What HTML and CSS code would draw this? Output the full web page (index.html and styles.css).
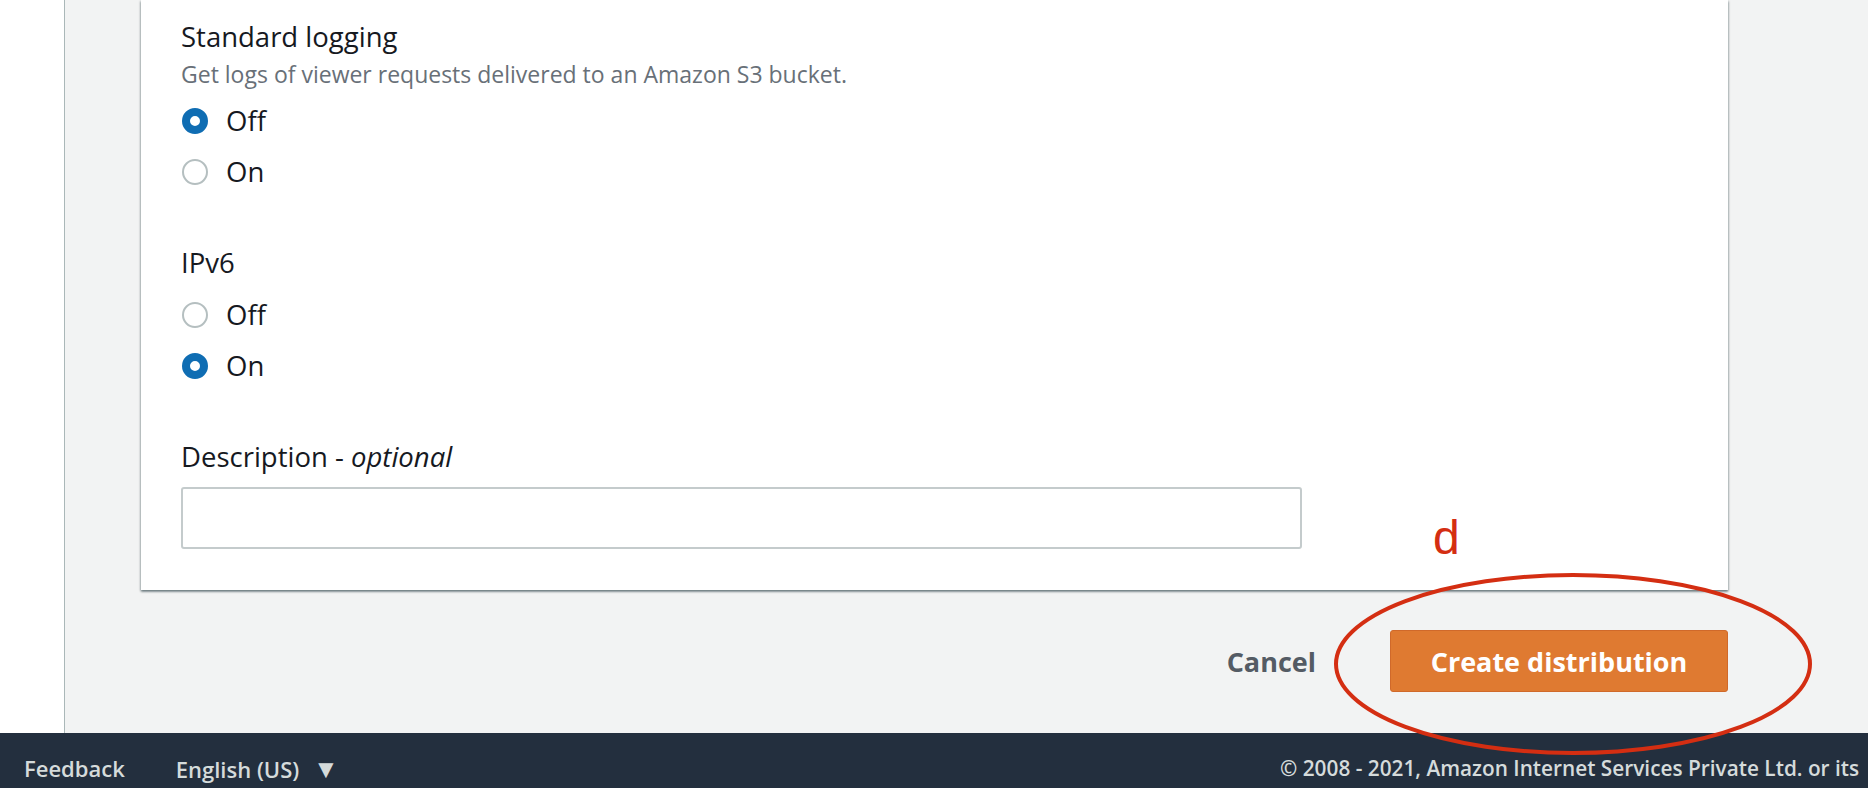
FILE: index.html
```html
<!DOCTYPE html>
<html lang="en">
<head>
<meta charset="utf-8">
<title>Create distribution</title>
<link rel="stylesheet" href="styles.css">
</head>
<body>
<div class="layout">
  <aside class="sidebar"></aside>
  <main class="main">
    <section class="card">
      <div class="field">
        <div class="label">Standard logging</div>
        <div class="hint">Get logs of viewer requests delivered to an Amazon S3 bucket.</div>
        <div class="radios">
          <label class="radio"><span class="dot checked"></span><span>Off</span></label>
          <label class="radio"><span class="dot"></span><span>On</span></label>
        </div>
      </div>
      <div class="field">
        <div class="label">IPv6</div>
        <div class="radios tight">
          <label class="radio"><span class="dot"></span><span>Off</span></label>
          <label class="radio"><span class="dot checked"></span><span>On</span></label>
        </div>
      </div>
      <div class="field">
        <div class="label">Description - <i>optional</i></div>
        <div class="input"></div>
      </div>
    </section>
    <div class="actions">
      <span class="cancel">Cancel</span>
      <span class="primary">Create distribution</span>
    </div>
    <div class="annotation">
      <span class="mark">d</span>
      <svg class="ring" width="490" height="190" viewBox="0 0 490 190"><ellipse cx="245" cy="95" rx="237" ry="89" fill="none" stroke="#d42e12" stroke-width="4"/></svg>
    </div>
  </main>
</div>
<footer class="footer">
  <span class="f-item">Feedback</span>
  <span class="f-item lang">English (US) <span class="caret">▼</span></span>
  <span class="copy">© 2008 - 2021, Amazon Internet Services Private Ltd. or its</span>
</footer>
</body>
</html>
```
FILE: styles.css
```css
* { box-sizing: border-box; }
html, body { margin: 0; padding: 0; }
body {
  width: 1868px;
  height: 788px;
  overflow: hidden;
  font-family: "Open Sans", "Noto Sans", sans-serif;
  color: #16191f;
  background: #f2f3f3;
}
.layout {
  display: flex;
  height: 733px;
}
.sidebar {
  width: 65px;
  background: #ffffff;
  border-right: 1px solid #aab7b8;
}
.main {
  flex: 1;
  position: relative;
  background: #f2f3f3;
  padding: 0 140px 0 76px;
}
.card {
  background: #ffffff;
  padding: 21px 40px 41px 40px;
  box-shadow: 0 2px 2px 0 rgba(0,28,36,0.35), 1px 1px 2px 0 rgba(0,28,36,0.2), -1px 1px 2px 0 rgba(0,28,36,0.2);
}
.field + .field { margin-top: 50px; }
.label {
  font-size: 27.5px;
  line-height: 32px;
  height: 32px;
}
.label i { font-style: italic; }
.hint {
  margin-top: 7px;
  font-size: 23px;
  line-height: 28px;
  color: #687078;
}
.radios { margin-top: 7px; }
.radios.tight { margin-top: 10px; }
.radio {
  display: flex;
  align-items: center;
  gap: 18px;
  height: 51px;
  font-size: 27.5px;
  padding-left: 1px;
}
.dot {
  width: 26px;
  height: 26px;
  border-radius: 50%;
  border: 2px solid #b5bfc0;
  background: #fff;
  flex: none;
}
.dot.checked {
  border: 8px solid #0f6db3;
}
.input {
  margin-top: 14px;
  width: 1121px;
  height: 62px;
  border: 2px solid #c4cbcc;
  border-radius: 3px;
  background: #fff;
}
.actions {
  margin-top: 40px;
  display: flex;
  justify-content: flex-end;
  align-items: center;
  gap: 74px;
}
.cancel {
  font-weight: 700;
  font-size: 27px;
  color: #545b64;
}
.primary {
  width: 338px;
  height: 62px;
  display: flex;
  align-items: center;
  justify-content: center;
  background: #df7a31;
  border: 1px solid #d0692a;
  border-radius: 3px;
  color: #ffffff;
  font-weight: 700;
  font-size: 27px;
}
.annotation {
  position: absolute;
  left: 1193px;
  top: 520px;
  width: 560px;
  height: 240px;
  pointer-events: none;
}
.mark {
  position: absolute;
  left: 175px;
  top: -6px;
  font-family: "Liberation Sans", Arial, sans-serif;
  font-size: 48px;
  line-height: 48px;
  color: #d42e12;
}
.ring {
  position: absolute;
  left: 70px;
  top: 49px;
}
.footer {
  height: 55px;
  background: #232f3e;
  display: flex;
  align-items: flex-start;
  padding: 20px 0 0 24px;
  color: #d5dbdb;
  font-size: 22px;
  line-height: 30px;
  font-weight: 600;
  white-space: nowrap;
  overflow: hidden;
}
.f-item { margin-right: 51px; }
.caret { font-size: 26px; margin-left: 8px; line-height: 30px; }
.copy { margin-left: auto; flex: none; width: 588px; font-size: 20.8px; }
```
